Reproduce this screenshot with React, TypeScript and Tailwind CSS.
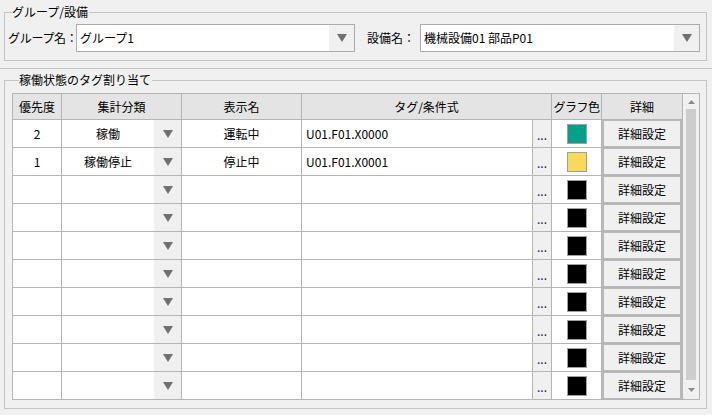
type Row = {
  priority: string;
  category: string;
  name: string;
  tag: string;
  color: string;
};

const rows: Row[] = [
  { priority: "2", category: "稼働", name: "運転中", tag: "U01.F01.X0000", color: "#00a08a" },
  { priority: "1", category: "稼働停止", name: "停止中", tag: "U01.F01.X0001", color: "#f9d957" },
  ...Array.from({ length: 8 }, () => ({ priority: "", category: "", name: "", tag: "", color: "#000000" })),
];

function DownArrow() {
  return (
    <svg width="10" height="8" viewBox="0 0 10 8">
      <polygon points="0,0 10,0 5,8" fill="#707070" />
    </svg>
  );
}

function Combo({ value, width }: { value: string; width: string }) {
  return (
    <div className={`${width} shrink-0 h-[28px] flex bg-white border border-[#acacac]`}>
      <div className="flex-1 flex items-center pl-[3px] whitespace-nowrap overflow-hidden">{value}</div>
      <div className="w-[25px] flex items-center justify-center bg-[#f0f0f0]">
        <DownArrow />
      </div>
    </div>
  );
}

export default function App() {
  return (
    <div
      className="w-[712px] h-[415px] bg-[#f0f0f0] text-[12px] leading-[16px] text-black overflow-hidden"
      style={{ fontFamily: '"Noto Sans CJK JP", "Noto Sans", sans-serif' }}
    >
      {/* 上段: グループ/設備 */}
      <div className="h-[69px] border-b border-[#c4c4c4] pt-[4px] px-[4px]">
        <fieldset className="w-[703px] border border-[#c4c4c4] pt-[4px] pb-[8px]">
          <legend className="ml-[7px] pr-[1px] leading-[16px]">グループ/設備</legend>
          <div className="flex items-center pl-[3px]">
            <span className="w-[68px] shrink-0 whitespace-nowrap tracking-[-0.3px]">グループ名：</span>
            <Combo value="グループ1" width="w-[279px]" />
            <span className="ml-[12px] w-[53px] shrink-0 whitespace-nowrap">設備名：</span>
            <Combo value="機械設備01 部品P01" width="w-[280px]" />
          </div>
        </fieldset>
      </div>

      {/* 下段: 稼働状態のタグ割り当て */}
      <div className="pt-[3px] px-[4px]">
        <fieldset className="w-[703px] border border-[#c4c4c4] pt-[5px] pb-[8px] pl-[7px]">
          <legend className="ml-[7px] pr-[1px] leading-[16px]">稼働状態のタグ割り当て</legend>
          <div className="w-[688px] h-[307px] flex border border-[#b4b4b4]">
            <div className="w-[669px] flex flex-col">
              <div className="h-[26px] flex bg-[#e4e4e4] border-b border-[#b4b4b4] shrink-0">
                <div className="w-[49px] border-r border-[#b4b4b4] flex items-center justify-center">優先度</div>
                <div className="w-[120px] border-r border-[#b4b4b4] flex items-center justify-center">集計分類</div>
                <div className="w-[120px] border-r border-[#b4b4b4] flex items-center justify-center">表示名</div>
                <div className="w-[250px] border-r border-[#b4b4b4] flex items-center justify-center">タグ/条件式</div>
                <div className="w-[50px] border-r border-[#b4b4b4] flex items-center justify-center whitespace-nowrap tracking-[-0.5px]">グラフ色</div>
                <div className="w-[80px] flex items-center justify-center">詳細</div>
              </div>
              {rows.map((r, i) => (
                <div
                  key={i}
                  className={`flex bg-white shrink-0 ${i === rows.length - 1 ? "h-[27px]" : "h-[28px] border-b border-[#b4b4b4]"}`}
                >
                  <div className="w-[49px] border-r border-[#b4b4b4] flex items-center justify-center">{r.priority}</div>
                  <div className="w-[120px] border-r border-[#b4b4b4] flex">
                    <div className="flex-1 flex items-center justify-center">{r.category}</div>
                    <div className="w-[27px] bg-[#f0f0f0] flex items-center justify-center">
                      <DownArrow />
                    </div>
                  </div>
                  <div className="w-[120px] border-r border-[#b4b4b4] flex items-center justify-center">{r.name}</div>
                  <div className="w-[231px] border-r border-[#b4b4b4] flex items-center pl-[4px]">{r.tag}</div>
                  <div className="w-[19px] border-r border-[#b4b4b4] bg-[#f0f0f0] flex items-end justify-center pb-[4px] text-[#1a1a40]">
                    ...
                  </div>
                  <div className="w-[50px] border-r border-[#b4b4b4] flex items-center justify-center">
                    <div className="w-[20px] h-[20px] border border-[#a0a0a0]" style={{ backgroundColor: r.color }} />
                  </div>
                  <div className="w-[80px] flex">
                    <div className="flex-1 flex items-center justify-center bg-[#f0f0f0] border-x-2 border-y border-[#b9b9b9]">
                      詳細設定
                    </div>
                  </div>
                </div>
              ))}
            </div>
            {/* スクロールバー */}
            <div className="w-[17px] border-l border-[#b4b4b4] bg-[#f0f0f0] flex flex-col items-center">
              <div className="h-[14px] flex items-center justify-center pt-[2px]">
                <svg width="7" height="4" viewBox="0 0 7 4">
                  <polygon points="3.5,0 7,4 0,4" fill="#8a8a8a" />
                </svg>
              </div>
              <div className="mt-[1px] w-[10px] h-[271px] bg-[#cdcdcd]" />
              <div className="flex-1 flex items-center justify-center">
                <svg width="7" height="4" viewBox="0 0 7 4">
                  <polygon points="0,0 7,0 3.5,4" fill="#8a8a8a" />
                </svg>
              </div>
            </div>
          </div>
        </fieldset>
      </div>
    </div>
  );
}
